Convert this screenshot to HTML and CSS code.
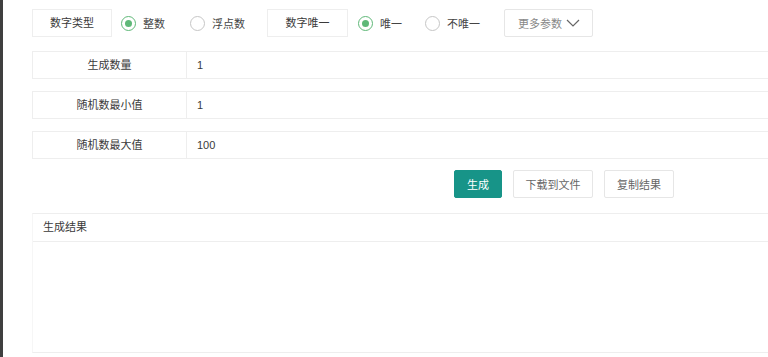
FILE: index.html
```html
<!DOCTYPE html>
<html lang="zh-CN">
<head>
    <meta charset="UTF-8">
    <meta name="viewport" content="width=device-width, initial-scale=1.0">
    <title>随机数生成</title>
    <link rel="stylesheet" href="styles.css">
</head>
<body>

<div class="page">
    <div class="options">
        <div class="opt-label">数字类型</div>
        <label class="radio checked"><i></i>整数</label>
        <label class="radio"><i></i>浮点数</label>
        <div class="opt-label second">数字唯一</div>
        <label class="radio checked"><i></i>唯一</label>
        <label class="radio"><i></i>不唯一</label>
        <button class="btn more">更多参数
            <svg width="14" height="8" viewBox="0 0 14 8"><path d="M1 1 L7 7 L13 1" fill="none" stroke="#666" stroke-width="1.2"/></svg>
        </button>
    </div>

    <div class="field">
        <div class="field-label">生成数量</div>
        <div class="field-value">1</div>
    </div>
    <div class="field">
        <div class="field-label">随机数最小值</div>
        <div class="field-value">1</div>
    </div>
    <div class="field">
        <div class="field-label">随机数最大值</div>
        <div class="field-value">100</div>
    </div>

    <div class="actions">
        <button class="btn primary">生成</button>
        <button class="btn">下载到文件</button>
        <button class="btn">复制结果</button>
    </div>

    <div class="result">
        <div class="result-head">生成结果</div>
        <div class="result-body"></div>
    </div>
</div>

</body>
</html>
```

FILE: styles.css
```css
body {
    margin: 0;
    font-family: "Liberation Sans", "Noto Sans CJK SC", sans-serif;
    font-size: 11px;
    color: #3a3a3a;
    background: #fff;
    border-left: 3px solid #3f3f3f;
    min-height: 100vh;
    box-sizing: border-box;
    overflow: hidden;
}
.page {
    padding: 9px 0 0 29px;
    width: 790px;
}
.options {
    display: flex;
    align-items: center;
    height: 28px;
}
.opt-label {
    box-sizing: border-box;
    width: 80px;
    height: 28px;
    line-height: 26px;
    border: 1px solid #eee;
    text-align: center;
}
.opt-label.second {
    width: 81px;
}
.radio {
    display: flex;
    align-items: center;
    color: #444;
}
.radio i {
    box-sizing: border-box;
    width: 15px;
    height: 15px;
    border: 1px solid #c6c6c6;
    border-radius: 50%;
    margin-right: 7px;
    position: relative;
}
.radio.checked i {
    border-color: #5fb878;
}
.radio.checked i::after {
    content: "";
    position: absolute;
    left: 3px;
    top: 3px;
    width: 7px;
    height: 7px;
    border-radius: 50%;
    background: #5fb878;
}
.opt-label + .radio {
    width: 69px;
    margin-left: 9px;
}
.second + .radio {
    width: 67px;
    margin-left: 10px;
}
.radio + .radio {
    margin-right: 22px;
}
.btn {
    box-sizing: border-box;
    height: 28px;
    padding: 0;
    border: 1px solid #e6e6e6;
    border-radius: 2px;
    background: #fff;
    color: #666;
    font-family: inherit;
    font-size: 11px;
    white-space: nowrap;
    cursor: pointer;
}
.more {
    width: 89px;
    margin-left: 2px;
    display: flex;
    align-items: center;
    gap: 4px;
    padding: 0 0 0 13px;
    color: #888;
}
.field {
    display: flex;
    height: 28px;
    margin-top: 14px;
}
.field + .field {
    margin-top: 12px;
}
.field-label {
    box-sizing: border-box;
    width: 155px;
    height: 28px;
    line-height: 26px;
    border: 1px solid #eee;
    text-align: center;
}
.field-value {
    flex: 1;
    box-sizing: border-box;
    height: 28px;
    line-height: 26px;
    border: 1px solid #eee;
    border-left: none;
    padding-left: 10px;
}
.actions {
    display: flex;
    gap: 11px;
    margin-top: 11px;
    padding-left: 422px;
}
.actions .btn:first-child {
    width: 48px;
}
.actions .btn:nth-child(2) {
    width: 80px;
}
.actions .btn:nth-child(3) {
    width: 70px;
}
.primary {
    background: #179488;
    border-color: #179488;
    color: #fff;
}
.result {
    margin-top: 15px;
    border: 1px solid #eee;
    border-left-color: #f6f6f6;
}
.result-head {
    height: 27px;
    line-height: 26px;
    padding-left: 10px;
    border-bottom: 1px solid #eee;
}
.result-body {
    height: 110px;
}
```
